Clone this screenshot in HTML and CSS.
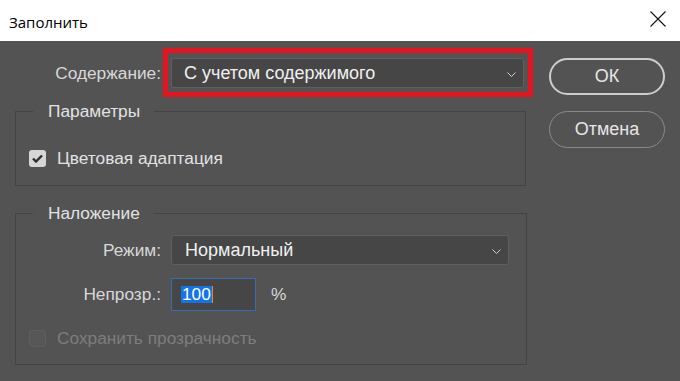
FILE: index.html
```html
<!DOCTYPE html>
<html lang="ru">
<head>
<meta charset="UTF-8" />
<title>Заполнить</title>
<link rel="stylesheet" href="styles.css">
</head>
<body>
  <div class="titlebar">
    <span class="title">Заполнить</span>
    <svg class="close" width="16" height="16" viewBox="0 0 16 16"><path d="M0.5 0.5 L15.5 15.5 M15.5 0.5 L0.5 15.5" stroke="#111" stroke-width="1.1" fill="none"/></svg>
  </div>

  <div class="dialog">
    <div class="main">
      <div class="field-row top-row">
        <label class="field-label">Содержание:</label>
        <div class="highlight">
          <div class="select content">
            <span>С учетом содержимого</span>
            <svg class="chevron" width="9" height="5" viewBox="0 0 9 5"><path d="M0.5 0.5 L4.5 4.5 L8.5 0.5" stroke="#cfcfcf" stroke-width="1" fill="none"/></svg>
          </div>
        </div>
      </div>

      <fieldset class="group params">
        <legend>Параметры</legend>
        <label class="check">
          <span class="box checked">
            <svg width="11" height="9" viewBox="0 0 11 9"><path d="M1 4.5 L4 7.5 L10 1.5" stroke="#2e2e2e" stroke-width="2.4" fill="none"/></svg>
          </span>
          Цветовая адаптация
        </label>
      </fieldset>

      <fieldset class="group blend">
        <legend>Наложение</legend>
        <div class="field-row">
          <label class="field-label inner">Режим:</label>
          <div class="select mode">
            <span>Нормальный</span>
            <svg class="chevron" width="9" height="5" viewBox="0 0 9 5"><path d="M0.5 0.5 L4.5 4.5 L8.5 0.5" stroke="#cfcfcf" stroke-width="1" fill="none"/></svg>
          </div>
        </div>
        <div class="field-row opacity-row">
          <label class="field-label inner">Непрозр.:</label>
          <div class="num-input"><span class="sel">100</span><span class="caret"></span></div>
          <span class="unit">%</span>
        </div>
        <label class="check disabled">
          <span class="box"></span>
          Сохранить прозрачность
        </label>
      </fieldset>
    </div>

    <div class="buttons">
      <button class="btn default">ОК</button>
      <button class="btn">Отмена</button>
    </div>
  </div>
</body>
</html>
```

FILE: styles.css
```css
html, body {
  margin: 0;
  padding: 0;
}
body {
  width: 680px;
  height: 381px;
  background: #535353;
  font-family: "Liberation Sans", Arial, sans-serif;
  font-size: 17.3px;
  color: #e2e2e2;
  overflow: hidden;
}
.titlebar {
  height: 41px;
  background: #fff;
  display: flex;
  align-items: center;
  justify-content: space-between;
  padding: 0 14px 0 9px;
  box-sizing: border-box;
}
.title {
  font-family: "Open Sans", "Noto Sans", sans-serif;
  font-size: 15px;
  color: #000;
  margin-top: 2px;
}
.close {
  margin-top: -4px;
}
.dialog {
  display: flex;
  padding: 17px 0 0 15px;
}
.main {
  width: 511px;
}
.field-row {
  display: flex;
  align-items: center;
}
.field-label {
  width: 146px;
  margin-right: 10px;
  text-align: right;
  color: #d8d8d8;
}
.field-label.inner {
  width: 145px;
}
.select {
  height: 30px;
  box-sizing: border-box;
  background: #464646;
  border: 1px solid #5f5f5f;
  border-radius: 3px;
  display: flex;
  align-items: center;
  justify-content: space-between;
  padding: 0 7px 0 12px;
  color: #f0f0f0;
  font-size: 18px;
}
/* red annotation frame around the content dropdown */
.highlight {
  border: 5px solid #e3161f;
  padding: 5px 4px 4px 3px;
  margin: -10px -9px -9px -8px;
}
.select.content {
  width: 353px;
}
.select.mode {
  width: 338px;
  padding-left: 13px;
}
.chevron {
  margin-top: 2px;
}
.group {
  margin: 0;
  border: 1px solid #444;
  padding: 0;
}
.group legend {
  margin-left: 17px;
  padding: 0 14px 0 15px;
  height: 20px;
  line-height: 20px;
  color: #e2e2e2;
}
.params {
  margin-top: 13px;
  padding: 27px 12px 17px 0;
}
.params .check {
  margin-left: 13px;
}
.blend {
  margin-top: 17px;
  padding: 12px 17px 16px 0;
}
.check {
  display: flex;
  align-items: center;
  height: 20px;
  color: #e2e2e2;
}
.box {
  width: 17px;
  height: 17px;
  box-sizing: border-box;
  border-radius: 3px;
  margin-right: 11px;
  display: flex;
  align-items: center;
  justify-content: center;
}
.box.checked {
  background: #d6d6d6;
}
.check.disabled {
  margin: 17px 0 0 13px;
  color: #7d7d7d;
}
.check.disabled .box {
  border: 1px solid #5e5e5e;
  background: #575757;
}
.opacity-row {
  margin-top: 13px;
}
.num-input {
  width: 85px;
  height: 33px;
  box-sizing: border-box;
  background: #464646;
  border: 1px solid #3a6cae;
  display: flex;
  align-items: center;
  padding-left: 9px;
}
.sel {
  background: #1473e6;
  color: #fff;
  line-height: 17px;
  padding: 0 1px;
}
.caret {
  width: 1px;
  height: 17px;
  background: #e98a2d;
}
.unit {
  margin-left: 15px;
  color: #d8d8d8;
}
.buttons {
  margin-left: 23px;
  display: flex;
  flex-direction: column;
}
.btn {
  width: 116px;
  height: 37px;
  border-radius: 19px;
  background: transparent;
  border: 1px solid #8a8a8a;
  color: #e6e6e6;
  font-family: inherit;
  font-size: 18px;
  padding: 0;
}
.btn.default {
  border: 2px solid #cdcdcd;
  margin-bottom: 16px;
}
```
